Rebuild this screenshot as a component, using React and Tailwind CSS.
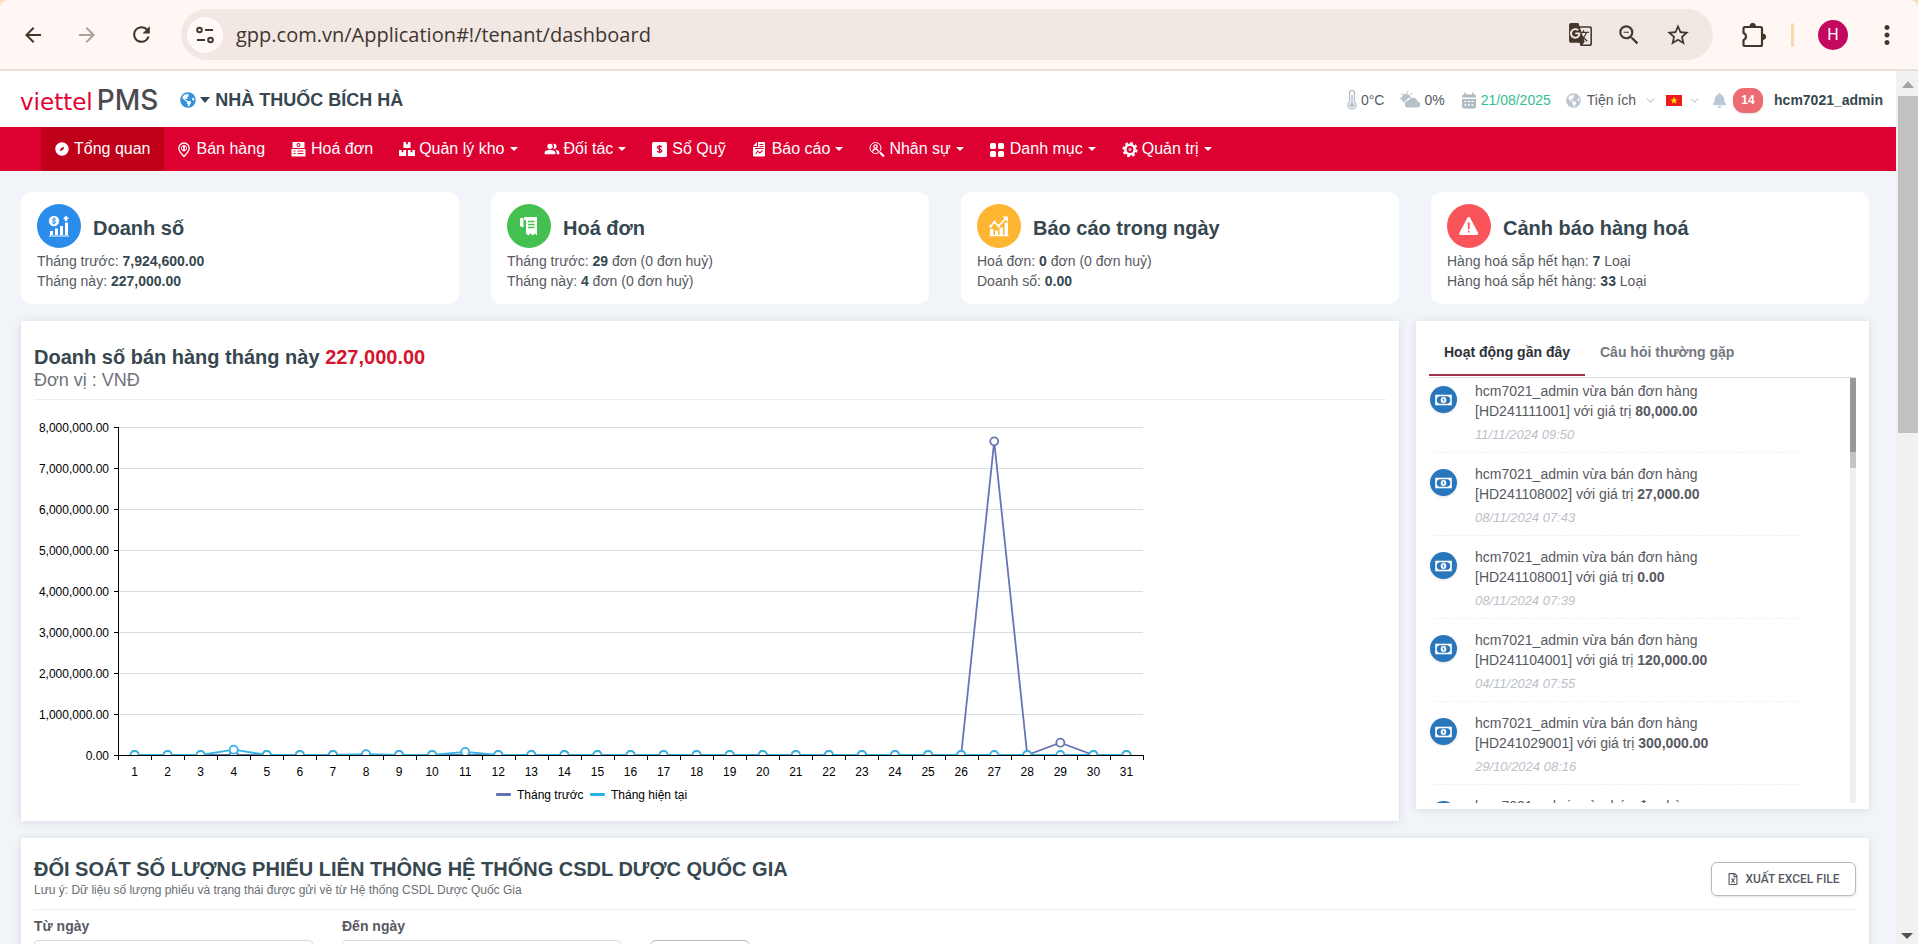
import { useState } from 'react';
import { MdArrowBack, MdArrowForward, MdRefresh, MdGTranslate, MdZoomOut, MdStarBorder, MdMoreVert, MdPeopleAlt } from 'react-icons/md';
import { FaBoxes, FaBell, FaGlobeAmericas, FaRegFileExcel } from 'react-icons/fa';
import { RiCompassFill } from 'react-icons/ri';
import { IoWarning } from 'react-icons/io5';
import { ChevronDown } from 'lucide-react';

const MENU = [
  { label: 'Tổng quan', icon: RiCompassFill, active: true },
  { label: 'Bán hàng', icon: PinIcon },
  { label: 'Hoá đơn', icon: BillIcon },
  { label: 'Quản lý kho', icon: FaBoxes, sub: true },
  { label: 'Đối tác', icon: MdPeopleAlt, sub: true },
  { label: 'Sổ Quỹ', icon: FundIcon },
  { label: 'Báo cáo', icon: ReportIcon, sub: true },
  { label: 'Nhân sự', icon: StaffIcon, sub: true },
  { label: 'Danh mục', icon: GridIcon, sub: true },
  { label: 'Quản trị', icon: GearIcon, sub: true },
];

const ACTIVITIES = [
  { code: 'HD241111001', value: '80,000.00', time: '11/11/2024 09:50' },
  { code: 'HD241108002', value: '27,000.00', time: '08/11/2024 07:43' },
  { code: 'HD241108001', value: '0.00', time: '08/11/2024 07:39' },
  { code: 'HD241104001', value: '120,000.00', time: '04/11/2024 07:55' },
  { code: 'HD241029001', value: '300,000.00', time: '29/10/2024 08:16' },
  { code: 'HD241028001', value: '50,000.00', time: '28/10/2024 08:10' },
];

const DAYS = Array.from({ length: 31 }, (_, i) => i + 1);
const LAST_MONTH = { 27: 7650000, 29: 300000 };
const THIS_MONTH = { 4: 130000, 8: 20000, 11: 77000 };

export default function App() {
  return (
    <div className="flex h-screen flex-col overflow-hidden bg-[#f1f4f9] font-['Liberation_Sans',Arial,sans-serif] text-sm text-[#575962]">
      <BrowserBar />
      <div className="flex min-h-0 flex-1">
        <div className="min-w-0 flex-1 overflow-hidden">
          <Header />
          <MainMenu />
          <main className="pt-[21px] pr-[27px] pl-[21px]">
            <div className="grid grid-cols-4 gap-8">
              <StatCard title="Doanh số" color="bg-[#2b8ceb]" icon={<SalesIcon />}>
                <p>Tháng trước: <Num>7,924,600.00</Num></p>
                <p>Tháng này: <Num>227,000.00</Num></p>
              </StatCard>
              <StatCard title="Hoá đơn" color="bg-[#43c04f]" icon={<ReceiptIcon />}>
                <p>Tháng trước: <Num>29</Num> đơn (0 đơn huỷ)</p>
                <p>Tháng này: <Num>4</Num> đơn (0 đơn huỷ)</p>
              </StatCard>
              <StatCard title="Báo cáo trong ngày" color="bg-[#fdb532]" icon={<GrowthIcon />}>
                <p>Hoá đơn: <Num>0</Num> đơn (0 đơn huỷ)</p>
                <p>Doanh số: <Num>0.00</Num></p>
              </StatCard>
              <StatCard title="Cảnh báo hàng hoá" color="bg-[#f9545a]" icon={<IoWarning size={24} />}>
                <p>Hàng hoá sắp hết hạn: <Num>7</Num> Loại</p>
                <p>Hàng hoá sắp hết hàng: <Num>33</Num> Loại</p>
              </StatCard>
            </div>

            <div className="mt-[17px] flex items-start gap-[17px]">
              <section className="min-w-0 flex-1 bg-white px-[13px] pt-6 shadow-[0_1px_8px_rgba(69,65,78,0.14)]">
                <div className="border-b border-[#ebedf2] pb-2">
                  <h2 className="text-xl leading-6 font-bold text-[#36474f]">
                    Doanh số bán hàng tháng này <span className="text-[#d5152e]">227,000.00</span>
                  </h2>
                  <p className="text-lg leading-[22px] text-[#6f727d]">Đơn vị : VNĐ</p>
                </div>
                <SalesChart />
              </section>
              <ActivityPanel />
            </div>

            <ReconcilePanel />
          </main>
        </div>
        <PageScrollbar />
      </div>
    </div>
  );
}

function Num({ children }) {
  return <b className="text-[#36474f]">{children}</b>;
}

function BrowserBar() {
  return (
    <div className="shrink-0 bg-[#fcdcb8]">
      <div className="flex h-[71px] items-center rounded-t-lg border-b-2 border-[#e9e0d8] bg-[#fff7f3] pr-4 pl-[21px] text-[#43372c]">
        <div className="flex gap-[30px]">
          <button aria-label="Back"><MdArrowBack size={24} /></button>
          <button aria-label="Forward" className="text-[#a9a39d]"><MdArrowForward size={24} /></button>
          <button aria-label="Reload"><MdRefresh size={25} /></button>
        </div>
        <div className="ml-[27px] flex h-[51px] flex-1 items-center rounded-full bg-[#f1e8e4] pr-[22px] pl-1.5">
          <button aria-label="Site information" className="flex size-9 items-center justify-center rounded-full bg-[#fffaf7]">
            <svg width="20" height="20" viewBox="0 0 20 20" fill="none" stroke="currentColor" strokeWidth="2">
              <circle cx="4.5" cy="5" r="2.3" />
              <path d="M10 5h8M2 15h8" />
              <circle cx="15.5" cy="15" r="2.3" />
            </svg>
          </button>
          <input
            aria-label="Address"
            defaultValue="gpp.com.vn/Application#!/tenant/dashboard"
            className="ml-[13px] min-w-0 flex-1 bg-transparent font-['Open_Sans','Noto_Sans',sans-serif] text-xl text-[#40362f] outline-none"
          />
          <div className="flex gap-[23px]">
            <button aria-label="Translate"><MdGTranslate size={25} /></button>
            <button aria-label="Zoom"><MdZoomOut size={26} /></button>
            <button aria-label="Bookmark"><MdStarBorder size={26} /></button>
          </div>
        </div>
        <button aria-label="Extensions" className="ml-7">
          <svg width="26" height="28" viewBox="0 0 26 28" fill="none" stroke="currentColor" strokeWidth="2.2" strokeLinejoin="round">
            <path d="M4 6h15.500q1.500 0 1.500 1.500v16q0 1.500-1.500 1.500H4q-1.500 0-1.500-1.500v-4.500q2.500-1 2.500-3.500t-2.500-3.500V7.500Q2.500 6 4 6z" />
            <path d="M9 5a2.700 2.700 0 0 1 5.400 0zM22 13a2.700 2.700 0 0 1 0 5.400z" fill="currentColor" strokeWidth="1" />
          </svg>
        </button>
        <span className="ml-6 h-6 w-[3px] rounded bg-[#fbd9b0]" />
        <button aria-label="Profile" className="ml-6 flex size-[30px] items-center justify-center rounded-full bg-[#c2095f] font-['Roboto',sans-serif] text-base text-white">H</button>
        <button aria-label="Menu" className="ml-6"><MdMoreVert size={30} /></button>
      </div>
    </div>
  );
}

function Header() {
  return (
    <header className="flex h-14 items-center justify-between bg-white pt-0.5 pr-[13px] pl-5">
      <div className="flex items-center">
        <a href="#/" className="flex items-baseline gap-1 pt-0.5">
          <span className="font-['DejaVu_Sans',sans-serif] text-[23px] leading-8 text-[#e4002f]">viettel</span>
          <span className="font-['Inter',sans-serif] text-[28px] leading-8 font-medium text-[#4c4c4e]">PMS</span>
        </a>
        <button className="ml-[22px] flex items-center text-lg font-bold text-[#36474f]">
          <FaGlobeAmericas size={16} className="text-[#3592dc]" />
          <span className="mr-[5px] ml-1 border-x-[5px] border-t-[6px] border-x-transparent border-t-[#36474f]" />
          NHÀ THUỐC BÍCH HÀ
        </button>
      </div>
      <div className="flex items-center">
        <span className="flex items-center gap-1"><ThermometerIcon />0°C</span>
        <span className="ml-4 flex items-center gap-1"><CloudIcon />0%</span>
        <span className="ml-4 flex items-center gap-1 text-[#34bf90]"><CalendarIcon />21/08/2025</span>
        <button className="ml-[15px] flex items-center gap-1.5">
          <FaGlobeAmericas size={15} className="text-[#bcc7d1]" />
          Tiện ích
          <ChevronDown size={13} className="ml-0.5 text-[#c3ccd4]" />
        </button>
        <button aria-label="Ngôn ngữ" className="ml-[9px] flex items-center gap-1.5">
          <svg width="16" height="11" viewBox="0 0 16 11">
            <rect width="16" height="11" fill="#ea1c1c" />
            <path d="M8 1.800l1 2.600h2.700L9.500 6l.8 2.800L8 7.200 5.700 8.800 6.500 6 4.300 4.400H7z" fill="#ffe600" />
          </svg>
          <ChevronDown size={13} className="text-[#c3ccd4]" />
        </button>
        <button className="ml-[11px] flex items-center gap-1.5">
          <FaBell size={15} className="text-[#b9c7d6]" />
          <span className="flex h-[25px] w-[30px] items-center justify-center rounded-[11px] bg-[#ee6a73] text-xs font-bold text-white shadow-sm">14</span>
        </button>
        <a href="#/profile" className="ml-[11px] font-bold text-[#36474f]">hcm7021_admin</a>
      </div>
    </header>
  );
}

function MainMenu() {
  return (
    <nav className="flex h-11 bg-[#dd0131] pl-[41px] text-base text-white">
      {MENU.map(({ label, icon: Icon, active, sub }) => (
        <a
          key={label}
          href="#/"
          className={`flex items-center px-[13px] ${active ? 'bg-[#c00018]' : ''}`}
        >
          <Icon className="mr-1 size-4" />
          {label}
          {sub && <span className="ml-[5px] border-x-4 border-t-4 border-x-transparent border-t-white" />}
        </a>
      ))}
    </nav>
  );
}

function StatCard({ title, color, icon, children }) {
  return (
    <section className="h-28 rounded-[10px] bg-white px-4 pt-3">
      <div className="flex items-center gap-3">
        <span className={`flex size-11 items-center justify-center rounded-full text-white ${color}`}>{icon}</span>
        <h3 className="pt-1 text-xl font-bold text-[#36474f]">{title}</h3>
      </div>
      <div className="mt-[3px] leading-5">{children}</div>
    </section>
  );
}

function SalesChart() {
  const left = 84;
  const right = 1109;
  const base = 355;
  const step = (right - left) / 31;
  const x = (day) => left + step * (day - 0.5);
  const y = (value) => base - (value / 1000000) * 41;
  const points = (data) => DAYS.map((d) => `${x(d)},${y(data[d] || 0)}`).join(' ');

  return (
    <svg width="1170" height="421" viewBox="0 0 1170 421" className="block max-w-full text-xs" fill="#000">
      <clipPath id="plot"><rect x={left} y="0" width={right - left} height={base} /></clipPath>
      {[0, 1, 2, 3, 4, 5, 6, 7, 8].map((m) => (
        <g key={m}>
          {m > 0 && <rect x={left} y={base - m * 41} width={right - left} height="1" fill="#dcdde0" />}
          <rect x={left - 4} y={base - m * 41} width="4" height="1" />
          <text x={left - 9} y={base - m * 41 + 5} textAnchor="end">{m ? `${m},000,000.00` : '0.00'}</text>
        </g>
      ))}
      <g clipPath="url(#plot)" fill="#fff" strokeWidth="1.800">
        <polyline points={points(LAST_MONTH)} fill="none" stroke="#6875b5" />
        {DAYS.map((d) => <circle key={d} cx={x(d)} cy={y(LAST_MONTH[d] || 0)} r="4" stroke="#6875b5" />)}
        <polyline points={points(THIS_MONTH)} fill="none" stroke="#35b2e3" />
        {DAYS.map((d) => <circle key={d} cx={x(d)} cy={y(THIS_MONTH[d] || 0)} r="4" stroke="#35b2e3" />)}
      </g>
      <rect x={left} y="27" width="1" height="329" />
      <rect x={left} y={base} width={right - left + 1} height="1" />
      {[0, ...DAYS].map((d) => <rect key={d} x={Math.round(left + step * d)} y={base} width="1" height="5" />)}
      {DAYS.map((d) => <text key={d} x={x(d)} y="376" textAnchor="middle">{d}</text>)}
      <rect x="462" y="393" width="15" height="3" rx="1" fill="#6370b2" />
      <text x="483" y="399">Tháng trước</text>
      <rect x="556" y="393" width="15" height="3" rx="1" fill="#2bb0e6" />
      <text x="577" y="399">Tháng hiện tại</text>
    </svg>
  );
}

function ActivityPanel() {
  const [tab, setTab] = useState('recent');
  const tabClass = (name) =>
    `h-[42px] border-b-2 px-[15px] pb-1 text-left font-bold ${tab === name ? 'border-[#a5324c] text-[#2f3238]' : 'border-transparent text-[#74787f]'}`;

  return (
    <section className="w-[453px] shrink-0 bg-white px-[13px] pt-[13px] pb-1.5 shadow-[0_1px_8px_rgba(69,65,78,0.14)]">
      <div className="flex border-b border-[#dcdee2] pb-px">
        <button className={tabClass('recent')} onClick={() => setTab('recent')}>Hoạt động gần đây</button>
        <button className={tabClass('faq')} onClick={() => setTab('faq')}>Câu hỏi thường gặp</button>
      </div>
      <div className="flex h-[425px] justify-between overflow-hidden">
        <ul className="w-[370px] pl-px">
          {ACTIVITIES.map((item) => (
            <li key={item.code} className="mb-2 flex h-[75px] gap-[18px] border-b border-dashed border-[#f0f1f5] pt-[3px]">
              <span className="mt-[5px] flex size-[27px] shrink-0 items-center justify-center rounded-full bg-[#2876bb] shadow-sm">
                <CashIcon />
              </span>
              <div className="leading-5">
                <p>hcm7021_admin vừa bán đơn hàng</p>
                <p>[{item.code}] với giá trị <b>{item.value}</b></p>
                <p className="mt-1 text-[13px] text-[#bcc1c9] italic">{item.time}</p>
              </div>
            </li>
          ))}
        </ul>
        <div className="flex w-1.5 flex-col bg-[#f0f0f0]">
          <div className="h-[74px] bg-[#989898]" />
          <div className="h-4 bg-[#c4c4c4]" />
        </div>
      </div>
    </section>
  );
}

function ReconcilePanel() {
  return (
    <section className="mt-[17px] bg-white px-[13px] shadow-[0_1px_8px_rgba(69,65,78,0.14)]">
      <div className="flex h-[72px] items-end justify-between border-b border-[#ebedf2] pb-2.5">
        <div>
          <h2 className="text-xl leading-6 font-bold text-[#36474f]">ĐỐI SOÁT SỐ LƯỢNG PHIẾU LIÊN THÔNG HỆ THỐNG CSDL DƯỢC QUỐC GIA</h2>
          <p className="text-xs leading-[18px] text-[#6b6f76]">Lưu ý: Dữ liệu số lượng phiếu và trạng thái được gửi về từ Hệ thống CSDL Dược Quốc Gia</p>
        </div>
        <button className="mb-[3px] flex h-[34px] w-[145px] items-center justify-center gap-1.5 rounded-md border border-[#b5bac0] font-['Roboto',sans-serif] text-xs font-medium text-[#575962] shadow-sm">
          <FaRegFileExcel size={12} />
          XUẤT EXCEL FILE
        </button>
      </div>
      <div className="flex items-end gap-[29px] pt-1.5">
        <label className="w-[279px] font-bold">
          <span className="block leading-5">Từ ngày</span>
          <input type="text" className="mt-1 block h-9 w-full rounded border border-[#d8dbe0] font-normal" />
        </label>
        <label className="w-[279px] font-bold">
          <span className="block leading-5">Đến ngày</span>
          <input type="text" className="mt-1 block h-9 w-full rounded border border-[#d8dbe0] font-normal" />
        </label>
        <button aria-label="Tìm kiếm" className="h-9 w-[100px] rounded-md border border-[#b5bac0]" />
      </div>
    </section>
  );
}

function PageScrollbar() {
  return (
    <div className="flex w-[22px] flex-col items-center justify-between bg-[#f1f1f1]">
      <div className="flex w-full flex-col items-center pl-0.5">
        <span className="mt-2.5 mb-2 border-x-[6px] border-b-[7px] border-x-transparent border-b-[#a3a3a3]" />
        <span className="h-[337px] w-full bg-[#c1c1c1]" />
      </div>
      <span className="mb-[5px] border-x-[6px] border-t-[6px] border-x-transparent border-t-[#505050]" />
    </div>
  );
}

/* Icons */

function PinIcon({ className }) {
  return (
    <svg className={className} viewBox="0 0 16 16" fill="none" stroke="currentColor" strokeWidth="1.300">
      <path d="M7 15.500C4.500 12.800 1.800 10.200 1.800 7.200a5.200 5.200 0 0 1 10.400 0c0 3-2.700 5.600-5.200 8.300z" />
      <circle cx="7" cy="7.200" r="2.600" strokeWidth="1" />
      <path d="M7 4.200v6" strokeWidth="1.800" />
    </svg>
  );
}

function BillIcon({ className }) {
  return (
    <svg className={className} viewBox="0 0 16 16" fill="currentColor" fillRule="evenodd">
      <path d="M1.500 1h12v6h-12zM7.500 2a2 2 0 1 0 0 4 2 2 0 0 0 0-4zM.500 8h14v7.500H.500zM2.500 9.500v1h2v-1zm0 2.500v1h2v-1zm4-2.500v1h6v-1zM6.500 12v1h6v-1z" />
      <circle cx="7.500" cy="4" r="1" />
    </svg>
  );
}

function FundIcon({ className }) {
  return (
    <svg className={className} viewBox="0 0 16 16">
      <rect y="1" width="15" height="15" rx="1.500" fill="currentColor" />
      <path d="M9.800 6.100C9.300 5.400 8.500 5.100 7.500 5.100 6.300 5.100 5.500 5.700 5.500 6.500c0 2.200 4.300 1 4.300 3.300 0 .9-.9 1.500-2.200 1.500-1.100 0-1.900-.4-2.400-1.100M7.600 4v8.300" fill="none" stroke="#dd0131" strokeWidth="1.300" />
    </svg>
  );
}

function ReportIcon({ className }) {
  return (
    <svg className={className} viewBox="0 0 16 16">
      <path d="M5 1h7q1 0 1 1v12.500q0 1-1 1H2q-1 0-1-1V5z" fill="currentColor" />
      <path d="M5.500 1v4.500H1M7.500 3.500h4M7.500 5.500h4M3 7.500h8.500M3.500 13l2.300-2.800 2 1.800 3-2.600" fill="none" stroke="#dd0131" strokeWidth="1.100" />
    </svg>
  );
}

function StaffIcon({ className }) {
  return (
    <svg className={className} viewBox="0 0 16 16" fill="none" stroke="currentColor">
      <circle cx="6.500" cy="7" r="5.500" strokeWidth="1" />
      <circle cx="6.500" cy="5.600" r="1.700" strokeWidth="1.300" />
      <path d="M3.500 10.600c.4-2 1.400-2.500 3-2.500s2.600.5 3 2.500" strokeWidth="1.300" />
      <path d="M11 11.500l4 4" strokeWidth="2.200" />
    </svg>
  );
}

function GridIcon({ className }) {
  return (
    <svg className={className} viewBox="0 0 16 16" fill="currentColor">
      <rect y="2" width="6" height="6" rx="1.500" />
      <rect x="8" y="2" width="6" height="6" rx="1.500" />
      <rect y="10" width="6" height="6" rx="1.500" />
      <rect x="8" y="10" width="6" height="6" rx="1.500" />
    </svg>
  );
}

function GearIcon({ className }) {
  return (
    <svg className={className} viewBox="0 0 16 16" fill="none" stroke="currentColor">
      <circle cx="8" cy="8.500" r="4.700" strokeWidth="2.600" />
      <circle cx="8" cy="8.500" r="6.600" strokeWidth="2" strokeDasharray="2.800 2.384" />
      <circle cx="8" cy="8.500" r="1" strokeWidth="1" />
    </svg>
  );
}

function SalesIcon() {
  return (
    <svg width="22" height="22" viewBox="0 0 22 22" fill="currentColor">
      <circle cx="6" cy="6" r="5.200" />
      <path d="M7.800 4.400C7.300 3.800 6.700 3.700 6 3.700c-.9 0-1.600.4-1.600 1.100C4.400 6.500 7.800 5.500 7.800 7.200c0 .8-.8 1.200-1.700 1.200-.8 0-1.500-.3-1.900-.9M6 2.600v6.900" fill="none" stroke="#2b8ceb" strokeWidth="1" />
      <path d="M18 .5l3 3.500h-1.700v2h-2.600V4H15zM2 16h3v4H2zM7 13.500h3V20H7zM12 11h3v9h-3zM17 7.500h3V20h-3zM1 20.500h20v1H1z" />
    </svg>
  );
}

function ReceiptIcon() {
  return (
    <svg width="22" height="22" viewBox="0 0 22 22" fill="currentColor">
      <path d="M6 2h13v18.500l-2.200-2-2.100 2-2.200-2-2.200 2-2.300-2V5H6z" />
      <path d="M2 3.500q2-1.500 3.500 0V12H4Q2 12 2 10z" />
      <path d="M10 6.500h6.500M10 9.500h6.500M10 12.500h6.500" stroke="#43c04f" strokeWidth="1.300" />
    </svg>
  );
}

function GrowthIcon() {
  return (
    <svg width="22" height="22" viewBox="0 0 22 22" fill="currentColor">
      <path d="M2 14h3.500v6H2zM7 15.500h3V20H7zM11.500 12.500h3.500V20h-3.500zM16.500 7.500H20V20h-3.500zM1.500 20h19v1.200h-19z" />
      <path d="M2.500 11.500l4-4.500 4 4L18 3.200" fill="none" stroke="currentColor" strokeWidth="1.700" />
      <path d="M14.500 1.500H20V7z" />
      <circle cx="2.700" cy="11.300" r="1.500" />
      <circle cx="6.500" cy="7" r="1.500" />
      <circle cx="10.500" cy="11" r="1.500" />
    </svg>
  );
}

function CashIcon() {
  return (
    <svg width="17" height="12" viewBox="0 0 17 12">
      <rect x="1" y="1.500" width="15" height="9" fill="none" stroke="#fff" strokeWidth="1.600" />
      <path d="M1 1h4L1 5zM16 1h-4l4 4zM1 11h4L1 7zM16 11h-4l4-4z" fill="#fff" />
      <ellipse cx="8.500" cy="6" rx="2.800" ry="3" fill="#fff" />
      <path d="M7.500 5h1.200v2.500" fill="none" stroke="#2876bb" strokeWidth="1" />
    </svg>
  );
}

function ThermometerIcon() {
  return (
    <svg width="10" height="20" viewBox="0 0 10 20" fill="none" stroke="#b4bec8">
      <path d="M2.500 12V3a2.500 2.500 0 0 1 5 0v9a4 4 0 1 1-5 0z" strokeWidth="1.300" />
      <path d="M5 5v9" strokeWidth="1.400" />
      <circle cx="5" cy="15.200" r="1.900" fill="#b4bec8" />
    </svg>
  );
}

function CloudIcon() {
  return (
    <svg width="20" height="18" viewBox="0 0 20 18" fill="#b7c1c8">
      <path d="M8.500 16.500a3.500 3.500 0 0 1-.3-7 5 5 0 0 1 9.300 1 3 3 0 0 1-.5 6z" />
      <path d="M2.700 10.500A4.300 4.300 0 0 1 9.500 4.300C10.500 5 11 5.700 11 6.300 9 6.800 7.700 7.600 7.200 8.600c-1.500.2-2.600 1.300-3 2.900q-1-.2-1.500-1z" />
      <path d="M7 .3v2M1.700 2.200l1.400 1.400M0 7.500h1.800M12 2.200l-1.400 1.400" stroke="#b7c1c8" strokeWidth="1.300" />
    </svg>
  );
}

function CalendarIcon() {
  return (
    <svg width="16" height="17" viewBox="0 0 16 17">
      <path d="M1 7h14v7.500q0 2-2 2H3q-2 0-2-2zM1 5.500v-1q0-2 2-2h10q2 0 2 2v1z" fill="#aeb9c2" />
      <path d="M4 .5v3M12 .5v3" stroke="#aeb9c2" strokeWidth="1.500" />
      <path d="M3.500 9.500h9M3.500 13h9" stroke="#fff" strokeWidth="1.500" strokeDasharray="2 1.500" />
    </svg>
  );
}
